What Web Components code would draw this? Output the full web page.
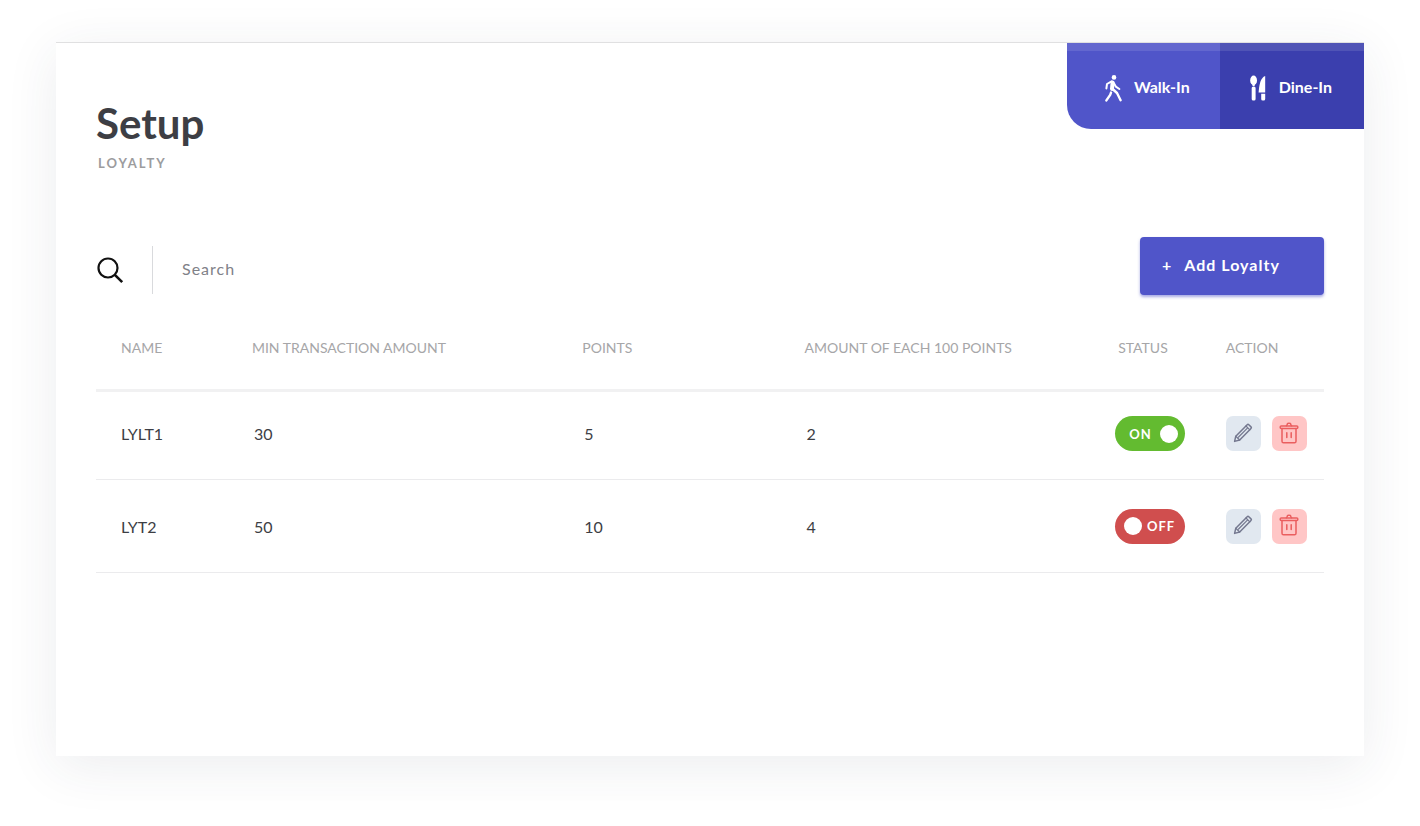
<!DOCTYPE html>
<html lang="en">
<head>
<meta charset="utf-8">
<meta name="viewport" content="width=device-width, initial-scale=1">
<title>Setup - Loyalty</title>
<style>
    body {
        --brand: #5055c9;
        --brand-dark: #3b3fae;
        --ink: #3d3e44;
        --muted: #a6a6a8;
        --line: #f1f1f2;
        margin: 0;
        background: #fff;
        color: var(--ink);
        font-family: Lato, "Open Sans", sans-serif;
        font-size: 16px;
    }
</style>
</head>
<body>
<loyalty-page>
    <mode-tab slot="tabs" icon="walk">Walk-In</mode-tab>
    <mode-tab slot="tabs" icon="dine" class="dark">Dine-In</mode-tab>
    <search-bar slot="tools"></search-bar>
    <add-button slot="tools">Add Loyalty</add-button>
    <loyalty-table></loyalty-table>
</loyalty-page>

<script>
const icons = {
    walk: `<svg width="17" height="27" viewBox="0 0 17 27" fill="none" stroke="#fff" stroke-linecap="round" stroke-linejoin="round" aria-hidden="true">
        <circle cx="9" cy="2.4" r="2.3" fill="#fff" stroke="none"/>
        <path d="M7.6 7.4 7 14" stroke-width="4"/>
        <path d="M6.6 6.3 2 9 1.4 13.4" stroke-width="2"/>
        <path d="M8.8 8 10.8 11.6 14.4 14" stroke-width="2"/>
        <path d="M7.6 14 12 18 15.6 25.2" stroke-width="2.4"/>
        <path d="M6 17.6 5.2 19.8 1.4 25.4" stroke-width="2.4"/>
    </svg>`,
    dine: `<svg width="17" height="27" viewBox="0 0 17 27" fill="#fff" aria-hidden="true">
        <ellipse cx="3.6" cy="5.4" rx="3.4" ry="4.9"/>
        <path d="M2.5 9h2.2v2H2.5z"/>
        <rect x="1.7" y="11.4" width="3.9" height="14.2" rx="1.6"/>
        <path d="M15.2 1v16.6H8.6C9.2 9.5 10.6 2.6 15.2 1z"/>
        <path d="M11.2 18.8h4V24a1.6 1.6 0 0 1-1.6 1.6h-.8a1.6 1.6 0 0 1-1.6-1.6z"/>
    </svg>`,
    search: `<svg width="28" height="28" viewBox="0 0 28 28" fill="none" stroke="#111" stroke-width="2.2" aria-hidden="true">
        <circle cx="12" cy="12" r="9.5"/>
        <path d="m18.6 18.6 7.6 7.6" stroke-width="2.6"/>
    </svg>`,
    edit: `<svg width="20" height="20" viewBox="0 0 20 20" fill="none" stroke="#74788f" stroke-width="1.5" stroke-linejoin="round" stroke-linecap="round" aria-hidden="true">
        <path d="M1.6 18.4 2.8 13.2 14.2 1.7c.5-.5 1.1-.5 1.6 0l2.200 2.200c.5.5.5 1.100 0 1.600L6.700 17z"/>
        <path d="M13 3l3.800 3.800M2.800 13.200 6.700 17M5.600 14l8.800-8.800" stroke-width="1.200"/>
    </svg>`,
    trash: `<svg width="20" height="22" viewBox="0 0 20 22" fill="none" stroke="#ea5e5f" stroke-width="1.5" stroke-linejoin="round" stroke-linecap="round" aria-hidden="true">
        <rect x="1.2" y="4" width="17.6" height="2.4" rx="1"/>
        <path d="M7.4 3.8C8 3.2 8.3 3 8.4 1.8c.2-.8 3-.8 3.2 0 .1 1.2.4 1.4 1 2"/>
        <path d="M3 6.6v12.6c0 1 .5 1.6 1.5 1.6h11c1 0 1.5-.6 1.5-1.6V6.6M7.8 10.8v4.8M12.2 10.8v4.8"/>
    </svg>`
}

const reset = `*, *::before, *::after { box-sizing: border-box; }
            button, input { font: inherit; }
            svg { display: block; flex: none; }`

class LoyaltyPage extends HTMLElement {
    constructor() {
        super()
        this.attachShadow({ mode: "open" }).innerHTML = `<style>
            ${reset}
            :host {
                display: flex;
                box-sizing: border-box;
                min-height: 100vh;
                padding: 42px 56px 70px;
            }

            main {
                flex: 1;
                min-width: 0;
                border-top: 1px solid #e0e0e1;
                background: #fff;
                box-shadow: 0 10px 50px rgba(40, 50, 80, .09);
            }

            header {
                display: flex;
                justify-content: space-between;
                align-items: flex-start;
                padding-left: 40px;
            }

            hgroup {
                padding-top: 54px;
            }

            h1, p {
                margin: 0;
                font-weight: 700;
            }

            h1 {
                font-size: 42px;
                line-height: 52px;
            }

            p {
                padding: 4px 0 0 2px;
                color: #9c9c9e;
                font-size: 13px;
                line-height: 20px;
                letter-spacing: 2px;
            }

            nav {
                display: flex;
                border-bottom-left-radius: 24px;
                overflow: hidden;
            }

            .tools {
                display: flex;
                justify-content: space-between;
                align-items: flex-start;
                padding: 64px 40px 0;
            }

            .content {
                padding: 10px 40px 40px;
            }
        </style>
        <main>
            <header>
                <hgroup>
                    <h1>Setup</h1>
                    <p>LOYALTY</p>
                </hgroup>
                <nav><slot name="tabs"></slot></nav>
            </header>
            <div class="tools"><slot name="tools"></slot></div>
            <div class="content"><slot></slot></div>
        </main>`
    }
}

class ModeTab extends HTMLElement {
    connectedCallback() {
        this.attachShadow({ mode: "open" }).innerHTML = `<style>
            ${reset}
            :host {
                display: block;
                background: var(--brand);
            }

            :host(.dark) {
                background: var(--brand-dark);
            }

            button {
                display: flex;
                align-items: center;
                gap: 12px;
                height: 86px;
                padding: 0 30px 4px 38px;
                border: 0;
                border-top: 8px solid rgba(255, 255, 255, .11);
                background: none;
                color: #fff;
                font-weight: 700;
                cursor: pointer;
            }

            :host(.dark) button {
                padding: 0 32px 4px 30px;
            }

            span {
                padding-bottom: 4px;
            }
        </style>
        <button type="button">${icons[this.getAttribute("icon")]}<span><slot></slot></span></button>`
    }
}

class SearchBar extends HTMLElement {
    constructor() {
        super()
        this.attachShadow({ mode: "open" }).innerHTML = `<style>
            ${reset}
            :host {
                display: block;
                flex: 1;
                padding-top: 9px;
            }

            form {
                display: flex;
                align-items: center;
            }

            label {
                padding-right: 28px;
            }

            input {
                flex: 1;
                min-width: 0;
                height: 48px;
                padding: 0 0 4px 29px;
                border: 0;
                border-left: 1px solid #d9dadd;
                background: none;
                color: var(--ink);
                letter-spacing: 1px;
                outline: none;
            }

            input::placeholder {
                color: #808188;
                opacity: 1;
            }
        </style>
        <form role="search">
            <label for="q" aria-label="Search">${icons.search}</label>
            <input id="q" type="text" placeholder="Search">
        </form>`
    }
}

class AddButton extends HTMLElement {
    constructor() {
        super()
        this.attachShadow({ mode: "open" }).innerHTML = `<style>
            ${reset}
            :host {
                display: block;
            }

            button {
                display: flex;
                align-items: center;
                gap: 12px;
                min-width: 184px;
                height: 58px;
                padding: 0 22px 4px;
                border: 0;
                border-radius: 4px;
                background: var(--brand);
                box-shadow: 0 2px 3px rgba(80, 85, 201, .5);
                color: #fff;
                font-weight: 700;
                letter-spacing: 1px;
                cursor: pointer;
            }
        </style>
        <button type="button"><span>+</span><slot></slot></button>`
    }
}

class StatusToggle extends HTMLElement {
    connectedCallback() {
        this.attachShadow({ mode: "open" })
        this.render()
        this.shadowRoot.addEventListener("change", event => {
            this.toggleAttribute("on", event.target.checked)
            this.shadowRoot.querySelector("span").textContent = this.text
        })
    }

    get text() {
        return this.hasAttribute("on") ? "ON" : "OFF"
    }

    render() {
        this.shadowRoot.innerHTML = `<style>
            ${reset}
            :host {
                display: block;
                width: 70px;
            }

            label {
                display: flex;
                flex-direction: row-reverse;
                align-items: center;
                justify-content: space-between;
                height: 35px;
                padding: 0 10px 0 9px;
                border-radius: 18px;
                background: #d04e4e;
                color: #fff;
                font-size: 13px;
                font-weight: 700;
                letter-spacing: 1px;
                cursor: pointer;
            }

            :host([on]) label {
                flex-direction: row;
                padding: 0 7px 0 14px;
                background: #63bb30;
            }

            input {
                appearance: none;
                width: 18px;
                height: 18px;
                margin: 0;
                border-radius: 50%;
                background: #fff;
                cursor: pointer;
            }
        </style>
        <label><span>${this.text}</span><input type="checkbox" role="switch"${this.hasAttribute("on") ? " checked" : ""}></label>`
    }
}

class IconButton extends HTMLElement {
    connectedCallback() {
        const icon = this.getAttribute("icon")
        this.attachShadow({ mode: "open" }).innerHTML = `<style>
            ${reset}
            :host {
                display: block;
            }

            button {
                display: grid;
                place-items: center;
                width: 35px;
                height: 35px;
                padding: 0 0 2px;
                border: 0;
                border-radius: 7px;
                background: #e1e8f0;
                cursor: pointer;
            }

            :host([icon="trash"]) button {
                background: #ffc6c6;
            }
        </style>
        <button type="button" aria-label="${icon === "trash" ? "Delete" : "Edit"}">${icons[icon]}</button>`
    }
}

class LoyaltyTable extends HTMLElement {
    rows = [
        { name: "LYLT1", min: 30, points: 5, amount: 2, on: true },
        { name: "LYT2", min: 50, points: 10, amount: 4, on: false }
    ]

    connectedCallback() {
        this.attachShadow({ mode: "open" }).innerHTML = this.render()
    }

    render() {
        return `<style>
            ${reset}
            :host {
                display: block;
            }

            table {
                width: 100%;
                table-layout: fixed;
                border-collapse: separate;
                border-spacing: 0;
                text-align: left;
            }

            th, td {
                padding: 0;
            }

            th {
                height: 87px;
                border-bottom: 3px solid var(--line);
                color: var(--muted);
                font-size: 14px;
                font-weight: 400;
                white-space: nowrap;
            }

            td {
                height: 93px;
                padding-left: 2px;
                border-bottom: 1px solid #ebebed;
            }

            tr:first-child td {
                height: 88px;
                padding-bottom: 4px;
            }

            th:first-child, td:first-child {
                padding-left: 25px;
            }

            td.control {
                padding-left: 0;
            }

            th.status {
                padding-left: 3px;
            }

            .name { width: 12.7%; }
            .min { width: 26.9%; }
            .points { width: 18.1%; }
            .amount { width: 25.3%; }
            .status { width: 9%; }

            .actions {
                display: flex;
                gap: 11px;
            }
        </style>
        <table>
            <thead>
                <tr>
                    <th class="name">NAME</th>
                    <th class="min">MIN TRANSACTION AMOUNT</th>
                    <th class="points">POINTS</th>
                    <th class="amount">AMOUNT OF EACH 100 POINTS</th>
                    <th class="status">STATUS</th>
                    <th>ACTION</th>
                </tr>
            </thead>
            <tbody>${this.rows.map(row => this.renderRow(row)).join("")}</tbody>
        </table>`
    }

    renderRow({ name, min, points, amount, on }) {
        return `<tr>
            <td>${name}</td>
            <td>${min}</td>
            <td>${points}</td>
            <td>${amount}</td>
            <td class="control"><status-toggle${on ? " on" : ""}></status-toggle></td>
            <td class="control"><div class="actions">
                <icon-button icon="edit"></icon-button>
                <icon-button icon="trash"></icon-button>
            </div></td>
        </tr>`
    }
}

customElements.define("mode-tab", ModeTab)
customElements.define("search-bar", SearchBar)
customElements.define("add-button", AddButton)
customElements.define("status-toggle", StatusToggle)
customElements.define("icon-button", IconButton)
customElements.define("loyalty-table", LoyaltyTable)
customElements.define("loyalty-page", LoyaltyPage)
</script>
</body>
</html>
